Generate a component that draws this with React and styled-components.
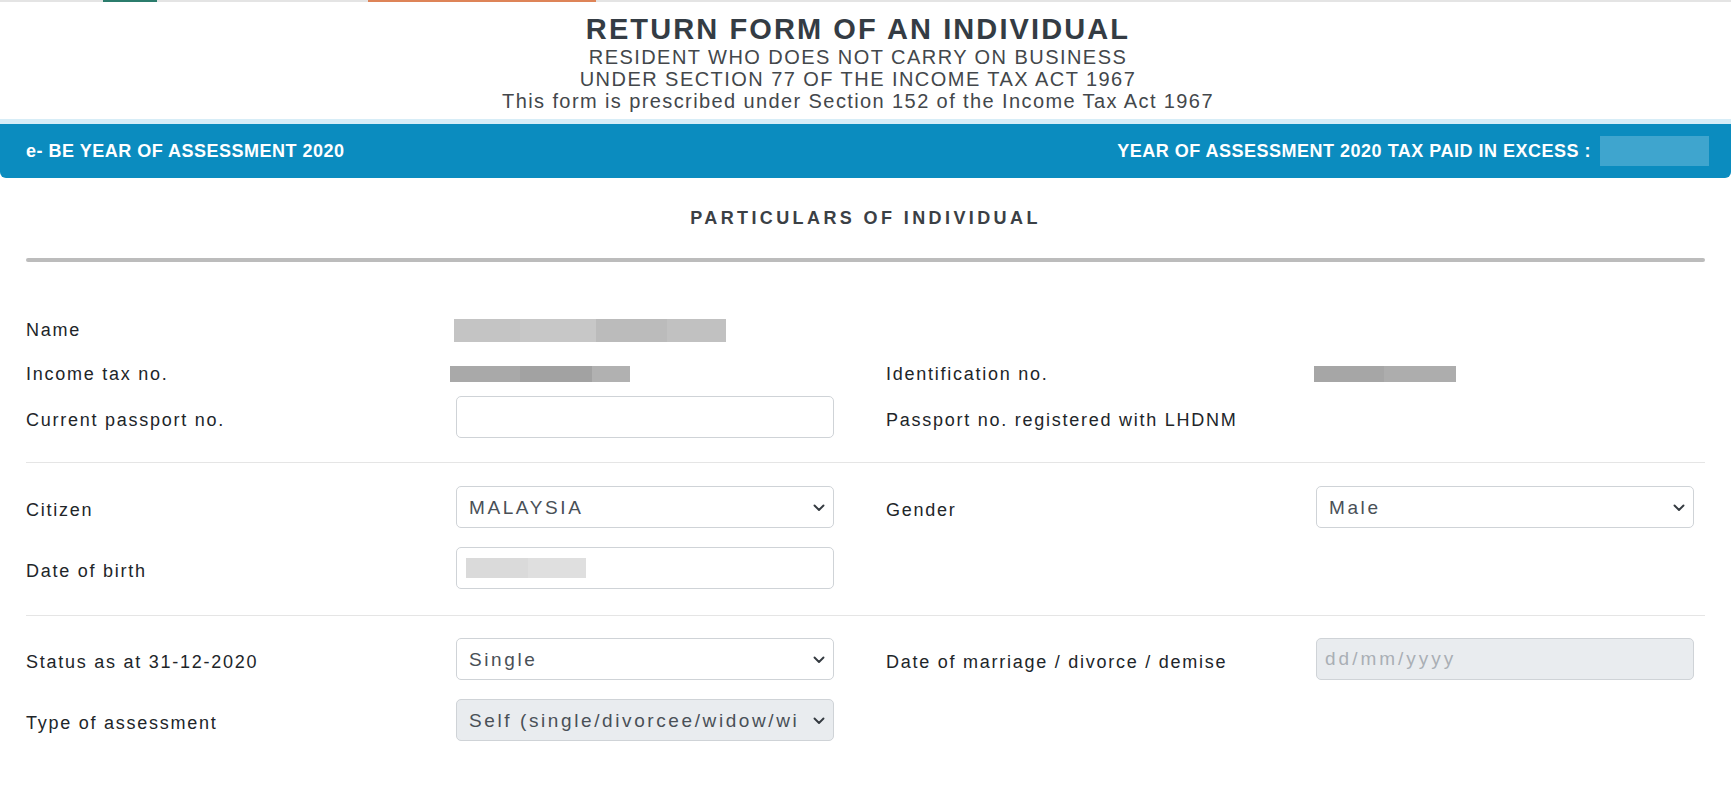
import React from 'react';
import styled, {createGlobalStyle} from 'styled-components';

// page wide defaults
const GlobalStyle = createGlobalStyle`
  * {
    box-sizing: border-box;
  }
  body {
    margin: 0;
    background: #fff;
    font-family: "Liberation Sans", Arial, sans-serif;
    color: #212529;
  }
`;

// thin strip left over from the page above
const TopStrip = styled.div`
  height: 2px;
  background: linear-gradient(
    to right,
    #e4e4e4 0 103px,
    #2b7c6c 103px 157px,
    #e4e4e4 157px 368px,
    #de8458 368px 596px,
    #e4e4e4 596px
  );
`;

const Header = styled.header`
  padding: 10px 15px 7px 0;
  text-align: center;
  background: #fff;
  border-bottom: 5px solid #d7edf7;
`;

const Title = styled.h1`
  margin: 0;
  font-size: 29px;
  line-height: 34px;
  font-weight: bold;
  letter-spacing: 2.1px;
  color: #343c44;
`;

const SubLine = styled.div`
  font-size: 20px;
  line-height: 22px;
  letter-spacing: ${(p) => p.$spacing || '1.45px'};
  color: #43474b;
`;

const InfoBar = styled.div`
  display: flex;
  align-items: center;
  justify-content: space-between;
  height: 54px;
  padding: 0 22px 0 26px;
  background: #0b8cbf;
  border-radius: 0 0 6px 6px;
  color: #fff;
  font-size: 18px;
  font-weight: bold;
  letter-spacing: 0.5px;
`;

const InfoRight = styled.div`
  display: flex;
  align-items: center;
  gap: 9px;
`;

const Masked = styled.div`
  flex: none;
  width: ${(p) => p.$w}px;
  height: ${(p) => p.$h}px;
  margin-left: ${(p) => p.$shift || 0}px;
  margin-top: ${(p) => p.$drop || 0}px;
  background: ${(p) => p.$bg};
`;

const Content = styled.main`
  padding: 0 26px 40px;
`;

const SectionTitle = styled.h2`
  margin: 28px 0 0;
  font-size: 18px;
  line-height: 24px;
  font-weight: bold;
  letter-spacing: 3.4px;
  text-align: center;
  color: #3b4045;
`;

const Rule = styled.div`
  height: 4px;
  margin-top: 28px;
  background: #bcbcbc;
  border-radius: 2px;
`;

const Group = styled.section`
  display: flex;
  flex-direction: column;
  gap: ${(p) => p.$gap}px;
  padding: ${(p) => p.$top}px 0 ${(p) => p.$bottom}px;
  border-bottom: ${(p) => (p.$last ? 'none' : '1px solid #e5e5e5')};
`;

const Row = styled.div`
  display: flex;
  gap: 52px;
`;

const Field = styled.div`
  display: grid;
  grid-template-columns: 430px 378px;
  align-items: center;
  height: 42px;
`;

const Label = styled.label`
  padding-top: ${(p) => (p.$plain ? 2 : 6)}px;
  font-size: 18px;
  letter-spacing: 1.75px;
  color: #212529;
`;

const controlStyle = `
  width: 378px;
  height: 42px;
  border: 1px solid #cfd3d7;
  border-radius: 5px;
  font-family: "Liberation Sans", Arial, sans-serif;
  font-size: 19px;
  letter-spacing: 2.6px;
  color: #495057;
  outline: none;
`;

const TextInput = styled.input`
  ${controlStyle}
  padding: 0 8px;
  background: ${(p) => (p.disabled ? '#e9ecef' : '#fff')};

  &::placeholder {
    color: #a9afb5;
    letter-spacing: 3px;
  }
`;

const InputBox = styled.div`
  ${controlStyle}
  display: flex;
  align-items: center;
  padding: 0 9px;
  background: #fff;
`;

const SelectWrap = styled.div`
  position: relative;
  width: 378px;
  height: 42px;
`;

const Select = styled.select`
  ${controlStyle}
  appearance: none;
  -webkit-appearance: none;
  padding: 0 36px 0 12px;
  background: ${(p) => (p.disabled ? '#e9ecef' : '#fff')};
  opacity: 1;
`;

const Chevron = styled.svg`
  position: absolute;
  top: 18px;
  right: 9px;
  pointer-events: none;
`;

const Dropdown = ({value, disabled}) => (
  <SelectWrap>
    <Select value={value} disabled={disabled} onChange={() => {}}>
      <option value={value}>{value}</option>
    </Select>
    <Chevron width="12" height="8" viewBox="0 0 12 8">
      <polyline
        points="1.5,1.5 6,6 10.5,1.5"
        fill="none"
        stroke="#343a40"
        strokeWidth="1.9"
        strokeLinecap="round"
        strokeLinejoin="round"
      />
    </Chevron>
  </SelectWrap>
);

const stripes = (stops) =>
  `linear-gradient(to right, ${stops
    .map(([color, from, to]) => `${color} ${from}px ${to}px`)
    .join(', ')})`;

export default function App() {
  return (
    <>
      <GlobalStyle />
      <TopStrip />
      <Header>
        <Title>RETURN FORM OF AN INDIVIDUAL</Title>
        <SubLine>RESIDENT WHO DOES NOT CARRY ON BUSINESS</SubLine>
        <SubLine>UNDER SECTION 77 OF THE INCOME TAX ACT 1967</SubLine>
        <SubLine $spacing="1.4px">
          This form is prescribed under Section 152 of the Income Tax Act 1967
        </SubLine>
      </Header>

      <InfoBar>
        <span>e- BE YEAR OF ASSESSMENT 2020</span>
        <InfoRight>
          <span>YEAR OF ASSESSMENT 2020 TAX PAID IN EXCESS :</span>
          <Masked $w={109} $h={30} $bg="#3fa5ce" />
        </InfoRight>
      </InfoBar>

      <Content>
        <SectionTitle>PARTICULARS OF INDIVIDUAL</SectionTitle>
        <Rule />

        <Group $gap={2} $top={46} $bottom={24}>
          <Row>
            <Field>
              <Label $plain>Name</Label>
              <Masked
                $w={272}
                $h={23}
                $shift={-2}
                $drop={2}
                $bg={stripes([
                  ['#c4c4c4', 0, 66],
                  ['#c7c7c7', 66, 142],
                  ['#bbbbbb', 142, 213],
                  ['#c1c1c1', 213, 272],
                ])}
              />
            </Field>
          </Row>
          <Row>
            <Field>
              <Label $plain>Income tax no.</Label>
              <Masked
                $w={180}
                $h={16}
                $shift={-6}
                $drop={2}
                $bg={stripes([
                  ['#a9a9a9', 0, 70],
                  ['#a2a2a2', 70, 142],
                  ['#b1b1b1', 142, 180],
                ])}
              />
            </Field>
            <Field>
              <Label $plain>Identification no.</Label>
              <Masked
                $w={142}
                $h={16}
                $shift={-2}
                $drop={2}
                $bg={stripes([
                  ['#a6a6a6', 0, 70],
                  ['#adadad', 70, 142],
                ])}
              />
            </Field>
          </Row>
          <Row>
            <Field>
              <Label>Current passport no.</Label>
              <TextInput type="text" />
            </Field>
            <Field>
              <Label>Passport no. registered with LHDNM</Label>
              <span />
            </Field>
          </Row>
        </Group>

        <Group $gap={19} $top={23} $bottom={26}>
          <Row>
            <Field>
              <Label>Citizen</Label>
              <Dropdown value="MALAYSIA" />
            </Field>
            <Field>
              <Label>Gender</Label>
              <Dropdown value="Male" />
            </Field>
          </Row>
          <Row>
            <Field>
              <Label>Date of birth</Label>
              <InputBox>
                <Masked
                  $w={120}
                  $h={20}
                  $bg={stripes([
                    ['#dadada', 0, 62],
                    ['#dfdfdf', 62, 120],
                  ])}
                />
              </InputBox>
            </Field>
          </Row>
        </Group>

        <Group $gap={19} $top={22} $bottom={0} $last>
          <Row>
            <Field>
              <Label>Status as at 31-12-2020</Label>
              <Dropdown value="Single" />
            </Field>
            <Field>
              <Label>Date of marriage / divorce / demise</Label>
              <TextInput type="text" placeholder="dd/mm/yyyy" disabled />
            </Field>
          </Row>
          <Row>
            <Field>
              <Label>Type of assessment</Label>
              <Dropdown
                value="Self (single/divorcee/widow/widower/deceased)"
                disabled
              />
            </Field>
          </Row>
        </Group>
      </Content>
    </>
  );
}
